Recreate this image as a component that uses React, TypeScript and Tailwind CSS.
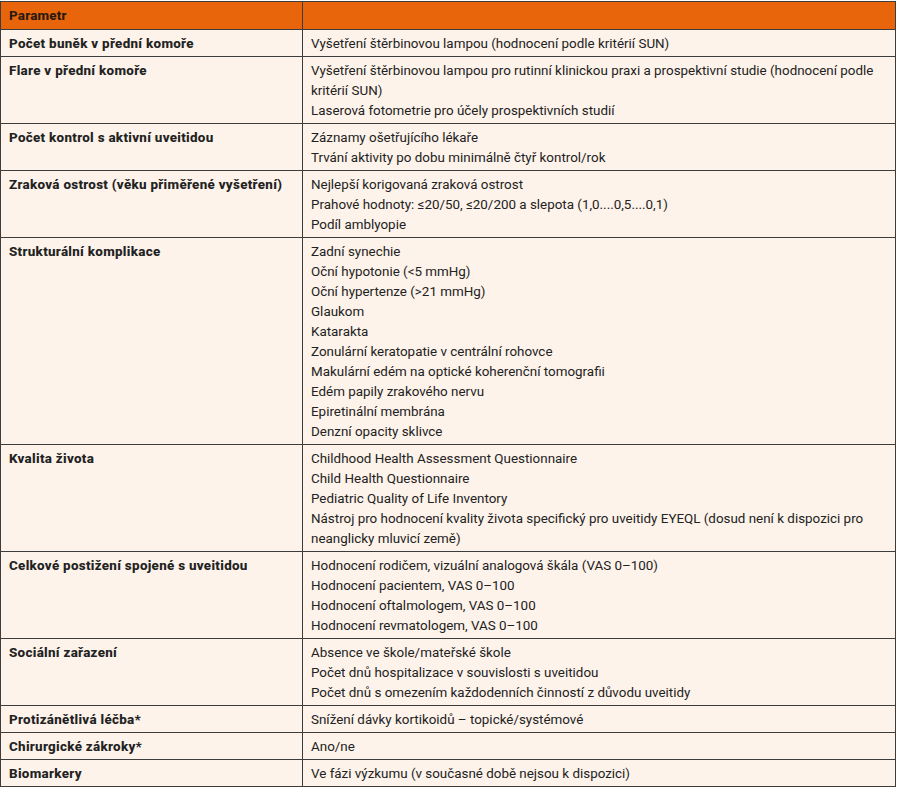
import React from "react";

type Row = { label: string; items: React.ReactNode[] };

const rows: Row[] = [
  { label: "Počet buněk v přední komoře", items: ["Vyšetření štěrbinovou lampou (hodnocení podle kritérií SUN)"] },
  {
    label: "Flare v přední komoře",
    items: [
      <>Vyšetření štěrbinovou lampou pro rutinní klinickou praxi a prospektivní studie (hodnocení podle<br />kritérií SUN)</>,
      "Laserová fotometrie pro účely prospektivních studií",
    ],
  },
  {
    label: "Počet kontrol s aktivní uveitidou",
    items: ["Záznamy ošetřujícího lékaře", "Trvání aktivity po dobu minimálně čtyř kontrol/rok"],
  },
  {
    label: "Zraková ostrost (věku přiměřené vyšetření)",
    items: [
      "Nejlepší korigovaná zraková ostrost",
      "Prahové hodnoty: ≤20/50, ≤20/200 a slepota (1,0....0,5....0,1)",
      "Podíl amblyopie",
    ],
  },
  {
    label: "Strukturální komplikace",
    items: [
      "Zadní synechie",
      "Oční hypotonie (<5 mmHg)",
      "Oční hypertenze (>21 mmHg)",
      "Glaukom",
      "Katarakta",
      "Zonulární keratopatie v centrální rohovce",
      "Makulární edém na optické koherenční tomografii",
      "Edém papily zrakového nervu",
      "Epiretinální membrána",
      "Denzní opacity sklivce",
    ],
  },
  {
    label: "Kvalita života",
    items: [
      "Childhood Health Assessment Questionnaire",
      "Child Health Questionnaire",
      "Pediatric Quality of Life Inventory",
      <>Nástroj pro hodnocení kvality života specifický pro uveitidy EYEQL (dosud není k dispozici pro<br />neanglicky mluvicí země)</>,
    ],
  },
  {
    label: "Celkové postižení spojené s uveitidou",
    items: [
      "Hodnocení rodičem, vizuální analogová škála (VAS 0–100)",
      "Hodnocení pacientem, VAS 0–100",
      "Hodnocení oftalmologem, VAS 0–100",
      "Hodnocení revmatologem, VAS 0–100",
    ],
  },
  {
    label: "Sociální zařazení",
    items: [
      "Absence ve škole/mateřské škole",
      "Počet dnů hospitalizace v souvislosti s uveitidou",
      "Počet dnů s omezením každodenních činností z důvodu uveitidy",
    ],
  },
  { label: "Protizánětlivá léčba*", items: ["Snížení dávky kortikoidů – topické/systémové"] },
  { label: "Chirurgické zákroky*", items: ["Ano/ne"] },
  { label: "Biomarkery", items: ["Ve fázi výzkumu (v současné době nejsou k dispozici)"] },
];

export default function App() {
  return (
    <div
      className="min-h-[800px] bg-white pt-px text-[13.4px] leading-[20px] text-[#222]"
      style={{ fontFamily: "Roboto, 'Liberation Sans', sans-serif" }}
    >
      <div className="w-[896px] border border-[#3c3c3c] bg-[#fdf3ea]">
        <div className="flex bg-[#e8650c] border-b border-[#3c3c3c]">
          <div className="w-[302px] shrink-0 border-r border-[#3c3c3c] pl-[8px] pt-[4px] pb-[3px] font-extrabold tracking-[0.2px] text-[#2a1a10]">
            Parametr
          </div>
          <div className="flex-1" />
        </div>
        {rows.map((r, i) => (
          <div
            key={i}
            className={`flex ${i < rows.length - 1 ? "border-b border-[#3c3c3c]" : ""}`}
          >
            <div className="w-[302px] shrink-0 border-r border-[#3c3c3c] pl-[8px] pt-[4px] pb-[2px] font-extrabold tracking-[0.3px]">
              {r.label}
            </div>
            <div className="flex-1 pl-[8px] pr-[6px] pt-[4px] pb-[2px]">
              {r.items.map((it, j) => (
                <div key={j}>{it}</div>
              ))}
            </div>
          </div>
        ))}
      </div>
    </div>
  );
}
